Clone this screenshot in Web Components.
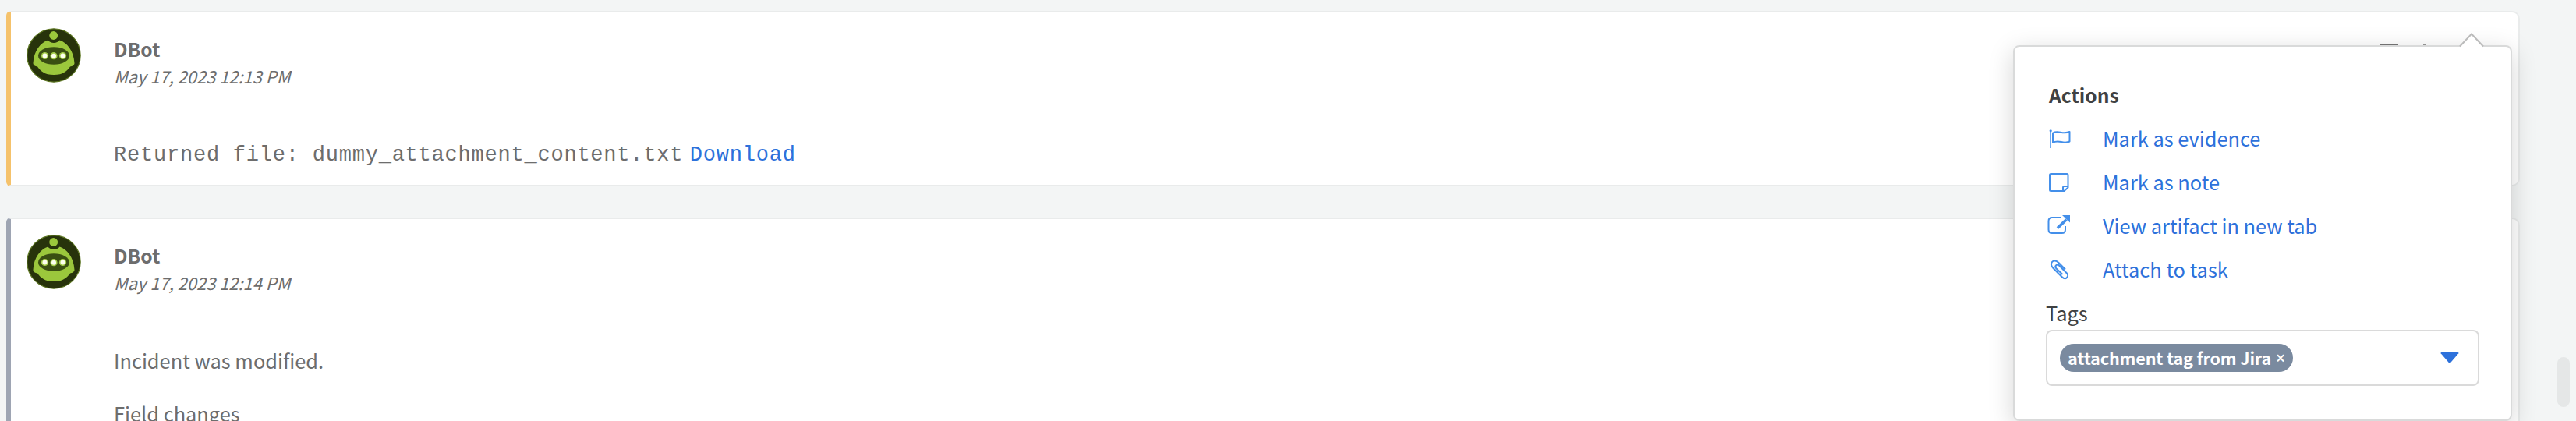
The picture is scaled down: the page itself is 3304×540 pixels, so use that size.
<!DOCTYPE html>
<html lang="en"><head><meta charset="utf-8"><title>War room</title>
<style>
html,body{margin:0;height:540px;overflow:hidden;background:#f3f5f5}
body{font-family:"Noto Sans CJK SC","Open Sans",sans-serif;font-size:25.4px;color:#6d6d6d}
</style></head><body>
<war-room>
<entry-card accent="#f5c26b" when="May 17, 2023 12:13 PM" style="height:225px">
<file-line>Returned file: dummy_attachment_content.txt</file-line>
</entry-card>
<entry-card accent="#9ea5b3" when="May 17, 2023 12:14 PM" style="height:320px">
<text-line>Incident was modified.</text-line><text-line>Field changes</text-line>
</entry-card>
<actions-popover slot="overlay">
<action-item icon="flag">Mark as evidence</action-item>
<action-item icon="note">Mark as note</action-item>
<action-item icon="open">View artifact in new tab</action-item>
<action-item icon="clip">Attach to task</action-item>
<tag-select slot="tags">attachment tag from Jira</tag-select>
</actions-popover>
</war-room>
<script>
const define=(name,html,setup)=>customElements.define(name,class extends HTMLElement{
  connectedCallback(){
    if(this.shadowRoot)return;
    const r=this.attachShadow({mode:'open'});
    r.innerHTML=html;
    if(setup)setup(this,r);
  }
});

define('bot-avatar',`<style>:host{display:block;width:70px;height:70px}svg{display:block}</style>
<svg width="70" height="70" viewBox="0 0 70 70">
<circle cx="35" cy="35" r="34.2" fill="#27330b" stroke="#5d7722" stroke-width="1.2"/>
<path d="M27.500 15.500C18 18.500 9.500 29 8.500 45c0 2.700 3 4.200 5.500 4.500C18 55 23 60 35 60s17-5 21-10.500c2.500-.3 5.500-1.800 5.500-4.500C60.500 29 52 18.500 42.500 15.500 39.500 20 30.500 20 27.500 15.500Z" fill="#9bc73c"/>
<circle cx="34.700" cy="9.500" r="5.400" fill="#9bc73c"/>
<ellipse cx="35" cy="35.500" rx="20" ry="11.300" fill="#3a4f12"/>
<g fill="#a5cd4b"><circle cx="23.500" cy="35.500" r="4.600"/><circle cx="35" cy="35.700" r="4.600"/><circle cx="46.500" cy="35.500" r="4.600"/></g>
<g fill="#fcffee"><circle cx="23.500" cy="35.500" r="3"/><circle cx="35" cy="35.700" r="3"/><circle cx="46.500" cy="35.500" r="3"/></g>
</svg>`);

define('entry-card',`<style>
:host{display:flex;box-sizing:border-box;border:2px solid #e9ebeb;border-left:6px solid var(--accent);border-radius:6px 10px 10px 6px;background:#fff;overflow:hidden}
.side{width:109px;padding:20px 0 0 20px;box-sizing:border-box;flex:none}
.main{padding:28px 0 0 23px}
.name{font-weight:700;font-size:24.600px;line-height:36px}
.when{font-style:italic;font-size:21.900px;line-height:35px}
.body{margin:64px 0 0 0}
</style>
<div class="side"><bot-avatar></bot-avatar></div>
<div class="main"><div class="name">DBot</div><div class="when"></div><div class="body"><slot></slot></div></div>`,(h,r)=>{
  h.style.setProperty('--accent',h.getAttribute('accent'));
  r.querySelector('.when').textContent=h.getAttribute('when');
});

define('file-line',`<style>:host{display:flex;gap:8.500px;font:27px/36px "Liberation Mono",monospace;letter-spacing:.78px;padding-top:2px}
a{color:#2d71db;text-decoration:none}</style><span><slot></slot></span><a href="#">Download</a>`);

define('text-line',`<style>:host{display:block;line-height:36px;margin-bottom:32px}</style><slot></slot>`);

const icons={
flag:`<path d="M2 2.500V24" stroke-width="2" opacity=".75"/><circle cx="2.200" cy="1.800" r="1.600" fill="#438fea" stroke="none"/><path d="M5 4.500c7-4 12.500 2.500 21.500-1.500V15.500c-8.500 4-13.500-3-21.500 1.500Z"/>`,
note:`<path d="M2.500 1h20.500q1.500 0 1.500 1.500v16L19.500 23H2.500Q1 23 1 21.500v-19Q1 1 2.500 1ZM18 23v-4.500q0-1.500 1.500-1.500h5"/>`,
open:`<g transform="translate(0 -2)"><path d="M16 3H4Q-.5 3-.5 7.500v11q0 4.500 4.500 4.500h12.500q4.500 0 4.500-4.500v-4.500"/><path d="M11 16.500 22.500 5.500" stroke-width="3.800"/><path d="M17 0H27v9.500Z" fill="#438fea" stroke="none"/></g>`,
clip:`<path d="M21 11.500 12.500 3C9-.5 5.500 0 4 2S2.500 7 5.500 10L17 21.500c2 2 4.500 2 6 .5s1.500-4-.5-6L13 6.500c-1.500-1.500-3-1-4 0s-1 2.500.5 4L17.500 18"/>`};

define('action-item',`<style>:host{display:flex;height:56px;align-items:center;color:#2d71db}
.icon{width:69px;height:28px;flex:none}svg{display:block;overflow:visible}</style>
<div class="icon"></div><span><slot></slot></span>`,(h,r)=>{
  r.querySelector('.icon').innerHTML=`<svg width="28" height="28" viewBox="0 -3 28 28" fill="none" stroke="#438fea" stroke-width="2" stroke-linejoin="round">${icons[h.getAttribute('icon')]}</svg>`;
});

define('tag-select',`<style>
:host{display:flex;box-sizing:border-box;width:556px;height:72px;border:2px solid #dadada;border-radius:8px;align-items:center;justify-content:space-between;padding:0 24px 0 16px}
.chip{display:flex;align-items:center;box-sizing:border-box;width:299px;height:36px;border-radius:18px;background:#7a8a9f;color:#fff;font-weight:700;font-size:21.600px;letter-spacing:-.15px;line-height:36px;padding:0 10px;gap:6px;white-space:nowrap}
.x{font-family:"Open Sans",sans-serif;font-size:21px;font-weight:600}
svg{display:block}</style>
<div class="chip"><span class="t"><slot></slot></span><span class="x">×</span></div>
<svg width="24" height="14" viewBox="0 0 24 14"><path d="M1.500 0h21q1.500 0 .8 1.300L13 13.200q-1 .8-2 0L.7 1.300Q0 0 1.500 0Z" fill="#2d71db"/></svg>`);

define('actions-popover',`<style>
:host{display:block;position:absolute;left:2582px;top:58px;width:640px;height:482px;box-sizing:border-box;border:2px solid #d9dada;border-radius:8px;background:#fff;box-shadow:0 8px 32px rgba(0,0,0,.17);color:#404142;padding:43px 40px 0 40px}
.arrow{position:absolute;right:34px;top:-18px}
h3{margin:0 0 0 4px;font-size:24.600px;line-height:36px;font-weight:700}
.items{padding:10px 0 0 4px}
.label{line-height:36px;margin:10px 0 4px}
</style>
<svg class="arrow" width="32" height="20" viewBox="0 0 32 20"><path d="M1 18 16 1 31 18V20H1Z" fill="#fff"/><path d="M1 17.500 16 1.500 31 17.500" fill="none" stroke="#bbb" stroke-width="2"/></svg>
<h3>Actions</h3><div class="items"><slot></slot></div><div class="label">Tags</div><slot name="tags"></slot>`);

define('war-room',`<style>
:host{display:block;position:relative;width:3304px;height:540px;overflow:hidden}
.list{display:flex;flex-direction:column;gap:40px;padding:14px 72px 0 8px}
.hint{position:absolute;left:3053px;top:56px}
.scroll{position:absolute;left:3280px;top:458px;width:16px;height:64px;border-radius:8px;background:#e5e7e7}
</style>
<div class="list"><slot></slot></div>
<svg class="hint" width="60" height="3"><path d="M0 1.500h23" stroke="#777" stroke-width="2"/><path d="M55 1.500h3" stroke="#999" stroke-width="2"/></svg>
<div class="scroll"></div><slot name="overlay"></slot>`);
</script></body></html>
